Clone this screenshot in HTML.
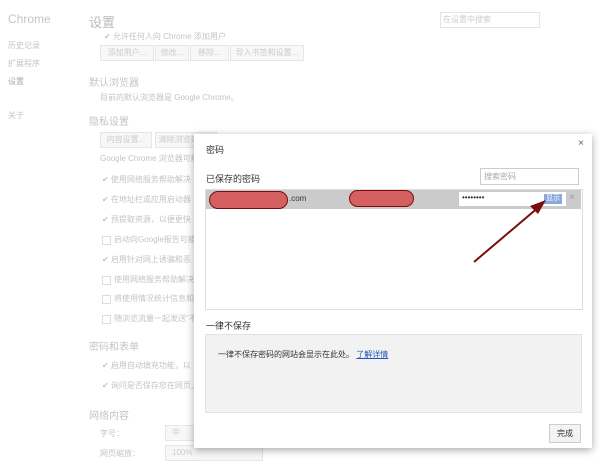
<!DOCTYPE html>
<html><head><meta charset="utf-8"><style>
body{margin:0;width:600px;height:462px;background:#fff;font-family:"Liberation Sans","Noto Sans CJK SC",sans-serif;position:relative;overflow:hidden;color:#bbb}
.a{position:absolute;white-space:nowrap;font-size:9px;color:#c4c4c4}
.btn{position:absolute;border:1px solid #e6e6e6;background:#f7f7f7;height:14px;font-size:8px;color:#ccc;line-height:14px;text-align:center}
.cb{position:absolute;width:7px;height:7px;border:1px solid #ddd}
.d{position:absolute;left:194px;top:134px;width:398px;height:314px;background:#fff;box-shadow:0 2px 8px rgba(0,0,0,.35);color:#333}
.d .a{color:#333}
</style></head><body>
<div class="a" style="left:8px;top:12px;font-size:12px">Chrome</div>
<div class="a" style="left:8px;top:40px;font-size:8px">历史记录</div>
<div class="a" style="left:8px;top:58px;font-size:8px">扩展程序</div>
<div class="a" style="left:8px;top:76px;font-size:8px;color:#aaa">设置</div>
<div class="a" style="left:8px;top:110px;font-size:8px">关于</div>
<div class="a" style="left:89px;top:12px;font-size:13px;color:#bbb">设置</div>
<div style="position:absolute;left:440px;top:12px;width:98px;height:14px;border:1px solid #e4e4e4"></div>
<div class="a" style="left:443px;top:14px;font-size:8px;color:#ccc">在设置中搜索</div>
<div class="a" style="left:104px;top:31px;font-size:8px">✔ 允许任何人向 Chrome 添加用户</div>
<div class="btn" style="left:100px;top:45px;width:52px">添加用户...</div>
<div class="btn" style="left:155px;top:45px;width:32px">修改...</div>
<div class="btn" style="left:190px;top:45px;width:37px">移除...</div>
<div class="btn" style="left:230px;top:45px;width:72px">导入书签和设置...</div>
<div class="a" style="left:89px;top:74px;font-size:10px">默认浏览器</div>
<div class="a" style="left:100px;top:92px;font-size:8px">目前的默认浏览器是 Google Chrome。</div>
<div class="a" style="left:89px;top:113px;font-size:10px">隐私设置</div>
<div class="btn" style="left:100px;top:132px;width:50px">内容设置...</div>
<div class="btn" style="left:155px;top:132px;width:60px">清除浏览数据...</div>
<div class="a" style="left:100px;top:153px;font-size:8px">Google Chrome 浏览器可能</div>
<div class="a" style="left:102px;top:174px;font-size:8px">✔ 使用网络服务帮助解决</div>
<div class="a" style="left:102px;top:194px;font-size:8px">✔ 在地址栏或应用启动器</div>
<div class="a" style="left:102px;top:214px;font-size:8px">✔ 预提取资源，以便更快</div>
<div class="cb" style="left:102px;top:236px"></div><div class="a" style="left:114px;top:234px;font-size:8px">启动向Google报告可能</div>
<div class="a" style="left:102px;top:254px;font-size:8px">✔ 启用针对网上诱骗和恶</div>
<div class="cb" style="left:102px;top:276px"></div><div class="a" style="left:114px;top:274px;font-size:8px">使用网络服务帮助解决</div>
<div class="cb" style="left:102px;top:295px"></div><div class="a" style="left:114px;top:293px;font-size:8px">将使用情况统计信息和</div>
<div class="cb" style="left:102px;top:315px"></div><div class="a" style="left:114px;top:313px;font-size:8px">随浏览流量一起发送"不</div>
<div class="a" style="left:89px;top:338px;font-size:10px">密码和表单</div>
<div class="a" style="left:102px;top:360px;font-size:8px">✔ 启用自动填充功能，以</div>
<div class="a" style="left:102px;top:380px;font-size:8px">✔ 询问是否保存您在网页上</div>
<div class="a" style="left:89px;top:407px;font-size:10px">网络内容</div>
<div class="a" style="left:100px;top:428px;font-size:8px">字号：</div>
<div class="btn" style="left:165px;top:425px;width:90px;text-align:left;padding-left:6px">中</div>
<div class="a" style="left:100px;top:448px;font-size:8px">网页缩放：</div>
<div class="btn" style="left:165px;top:445px;width:90px;text-align:left;padding-left:6px">100%</div>

<div class="d">
<div class="a" style="left:12px;top:9px;font-size:9px">密码</div>
<div class="a" style="right:8px;top:4px;font-size:10px;color:#666">×</div>
<div class="a" style="left:12px;top:38px;font-size:9px">已保存的密码</div>
<div style="position:absolute;left:286px;top:34px;width:97px;height:15px;border:1px solid #ccc"></div>
<div class="a" style="left:290px;top:37px;font-size:8px;color:#aaa">搜索密码</div>
<div style="position:absolute;left:11px;top:55px;width:376px;height:119px;border:1px solid #ddd"></div>
<div style="position:absolute;left:12px;top:56px;width:375px;height:19px;background:#cbcbcb"></div>
<div style="position:absolute;left:15px;top:57px;width:77px;height:16px;border-radius:9px;background:#d56060;border:1.5px solid #7a0d0d"></div>
<div class="a" style="left:95px;top:60px;font-size:8px">.com</div>
<div style="position:absolute;left:155px;top:56px;width:63px;height:15px;border-radius:9px;background:#d56060;border:1.5px solid #7a0d0d"></div>
<div style="position:absolute;left:265px;top:58px;width:107px;height:14px;background:#fff"></div>
<div class="a" style="left:268px;top:59px;font-size:8px">••••••••</div>
<div style="position:absolute;left:350px;top:60px;width:18px;height:10px;background:#8aa8e0;color:#fff;font-size:7px;line-height:10px;text-align:center">显示</div>
<div class="a" style="left:375px;top:58px;font-size:10px;color:#999">×</div>
<svg style="position:absolute;left:0;top:0" width="398" height="314"><line x1="280" y1="128" x2="346" y2="72" stroke="#7a0d0d" stroke-width="2"/><polygon points="352,66 336,72 344,80" fill="#7a0d0d"/></svg>
<div class="a" style="left:12px;top:185px;font-size:9px">一律不保存</div>
<div style="position:absolute;left:11px;top:200px;width:375px;height:77px;background:#f2f2f2;border:1px solid #e2e2e2"></div>
<div class="a" style="left:24px;top:215px;font-size:8px">一律不保存密码的网站会显示在此处。 <span style="color:#2255bb;text-decoration:underline">了解详情</span></div>
<div style="position:absolute;left:355px;top:290px;width:30px;height:17px;border:1px solid #ccc;background:#f3f3f3;font-size:8px;line-height:17px;text-align:center">完成</div>
</div>
</body></html>
